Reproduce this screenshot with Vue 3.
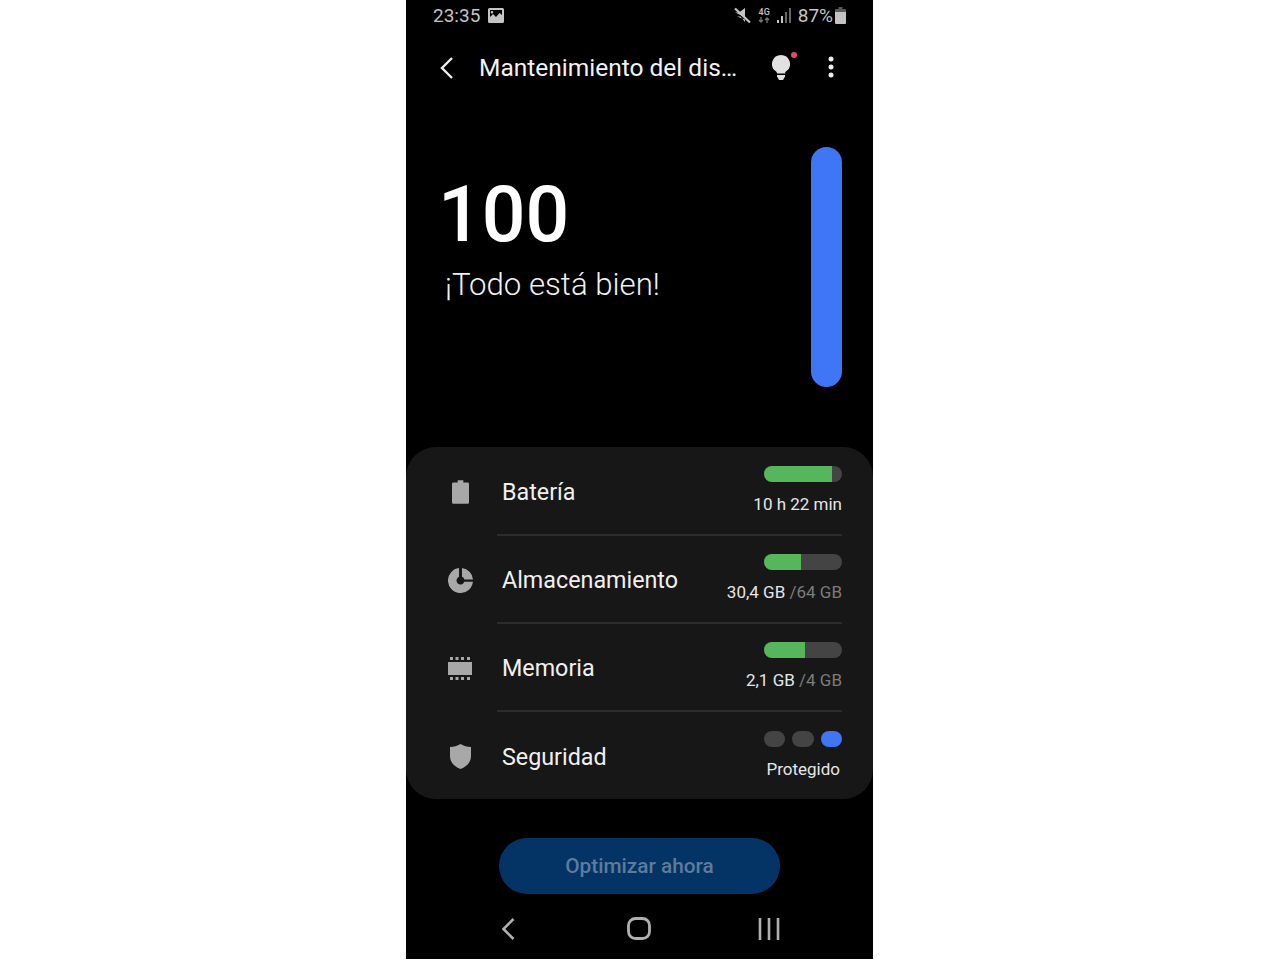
<template>
  <div class="phone">
    <!-- Status bar -->
    <div class="status-bar">
      <div class="status-left">
        <span>23:35</span>
        <svg class="img-icon" width="16" height="15" viewBox="0 0 16 15">
          <path fill="#c4c4c4" fill-rule="evenodd" d="M1.5 0h13A1.5 1.5 0 0 1 16 1.5v12a1.5 1.5 0 0 1-1.5 1.5h-13A1.5 1.5 0 0 1 0 13.500v-12A1.500 1.500 0 0 1 1.500 0zM2 2v7l3-3 3 3 3.500-4L14 7V2zM4 3a1.300 1.300 0 1 1 0 2.600A1.300 1.300 0 0 1 4 3z"/>
        </svg>
      </div>
      <div class="status-right">
        <svg class="mute" width="17" height="17" viewBox="0 0 17 17">
          <path fill="#c4c4c4" d="M1 5.500h4L11 1v9zM3 9.500h3.500L11 15v-2.500z"/>
          <path stroke="#c4c4c4" stroke-width="2.200" d="M1 1.500l15 14"/>
        </svg>
        <div class="net">
          <span class="net-label">4G</span>
          <svg width="12" height="6" viewBox="0 0 12 6">
            <path stroke="#777" stroke-width="1.300" fill="none" d="M3 0v5M1 3l2 2 2-2M9 6V1M7 3l2-2 2 2"/>
          </svg>
        </div>
        <svg class="signal" width="15" height="15" viewBox="0 0 15 15">
          <rect x="0" y="12" width="2" height="3" fill="#c4c4c4"/>
          <rect x="4" y="8" width="2" height="7" fill="#c4c4c4"/>
          <rect x="8" y="4" width="2" height="11" fill="#666"/>
          <rect x="12" y="0" width="2" height="15" fill="#666"/>
        </svg>
        <span class="pct">87%</span>
        <svg width="11" height="17" viewBox="0 0 11 17">
          <path fill="#5a5a5a" d="M3.500 0h4v2H10a1 1 0 0 1 1 1v2H0V3a1 1 0 0 1 1-1h2.500z"/>
          <path fill="#c4c4c4" d="M0 5h11v11a1 1 0 0 1-1 1H1a1 1 0 0 1-1-1z"/>
        </svg>
      </div>
    </div>

    <!-- Header -->
    <div class="app-bar">
      <svg class="back" width="16" height="24" viewBox="0 0 16 24">
        <path d="M13 2 3 12l10 10" fill="none" stroke="#eee" stroke-width="2.400"/>
      </svg>
      <span class="title">Mantenimiento del dis…</span>
      <div class="bulb">
        <svg width="18" height="26" viewBox="0 0 18 26">
          <path fill="#e2e2e2" d="M9 0a9 9 0 0 1 5.500 16.100c-1 .8-1.500 1.400-1.500 2.400H5c0-1-.5-1.600-1.500-2.400A9 9 0 0 1 9 0z"/>
          <path fill="#e2e2e2" d="M5 20h8v1.500L11 25H7l-2-3.500z"/>
        </svg>
        <span class="dot"></span>
      </div>
      <svg class="more" width="6" height="24" viewBox="0 0 6 24">
        <circle cx="3" cy="4" r="2.500" fill="#eee"/>
        <circle cx="3" cy="12" r="2.500" fill="#eee"/>
        <circle cx="3" cy="20" r="2.500" fill="#eee"/>
      </svg>
    </div>

    <!-- Score -->
    <div class="hero">
      <div class="score">
        <div class="score-num">100</div>
        <div class="score-msg">¡Todo está bien!</div>
      </div>
      <div class="score-bar"></div>
    </div>

    <!-- Items -->
    <div class="card">
      <div v-for="(item, i) in items" :key="item.label" class="row">
        <div class="row-icon">
          <svg v-if="item.icon === 'battery'" width="17" height="24" viewBox="0 0 18 25">
            <path fill="#a8a8a8" d="M6 0h6v2.500h4.500A1.500 1.500 0 0 1 18 4v19.500a1.500 1.500 0 0 1-1.500 1.500h-15A1.500 1.500 0 0 1 0 23.500V4a1.500 1.500 0 0 1 1.500-1.500H6z"/>
          </svg>
          <svg v-else-if="item.icon === 'storage'" width="25" height="25" viewBox="0 0 25 25">
            <path fill="#a8a8a8" d="M11 .1V8.800A4 4 0 1 0 16.300 13.800H24.900A12.500 12.500 0 1 1 11 .1z"/>
            <path fill="#a8a8a8" d="M14 .1A12.500 12.500 0 0 1 25 11.500H16.400A4 4 0 0 0 14 8.800z"/>
          </svg>
          <svg v-else-if="item.icon === 'memory'" width="24" height="23" viewBox="0 0 24 23">
            <rect x="0" y="5" width="24" height="13" fill="#a8a8a8"/>
            <g fill="#a8a8a8">
              <rect x="2" y="0" width="3" height="3"/><rect x="7.500" y="0" width="3" height="3"/><rect x="13" y="0" width="3" height="3"/><rect x="19" y="0" width="3" height="3"/>
              <rect x="2" y="20" width="3" height="3"/><rect x="7.500" y="20" width="3" height="3"/><rect x="13" y="20" width="3" height="3"/><rect x="19" y="20" width="3" height="3"/>
            </g>
          </svg>
          <svg v-else width="21" height="25" viewBox="0 0 21 25">
            <path fill="#a8a8a8" d="M10.500 0C14 2 17 3 21 3v9c0 6-4 10.500-10.500 13C4 22.500 0 18 0 12V3c4 0 7-1 10.500-3z"/>
          </svg>
        </div>
        <div class="row-body" :class="{ last: i === items.length - 1 }">
          <span class="row-label">{{ item.label }}</span>
          <div class="row-right">
            <div v-if="item.fill" class="meter">
              <div class="meter-fill" :style="{ width: item.fill + '%' }"></div>
            </div>
            <div v-else class="dots">
              <span class="sec-dot"></span>
              <span class="sec-dot"></span>
              <span class="sec-dot on"></span>
            </div>
            <div class="row-value" :class="{ inset: !item.fill }">
              {{ item.value }}<span v-if="item.total" class="total"> /{{ item.total }}</span>
            </div>
          </div>
        </div>
      </div>
    </div>

    <div class="action">
      <button type="button" class="optimize">Optimizar ahora</button>
    </div>

    <!-- Nav bar -->
    <div class="nav-bar">
      <svg width="14" height="24" viewBox="0 0 14 24">
        <path d="M12.500 2 2.500 12l10 10" fill="none" stroke="#b0b0b0" stroke-width="2.600"/>
      </svg>
      <svg class="home" width="24" height="23" viewBox="0 0 24 23">
        <rect x="1.500" y="1.500" width="21" height="20" rx="7" fill="none" stroke="#b0b0b0" stroke-width="2.800"/>
      </svg>
      <svg width="22" height="22" viewBox="0 0 22 22">
        <path d="M2 0v22M11 0v22M20 0v22" stroke="#b0b0b0" stroke-width="2.600"/>
      </svg>
    </div>
  </div>
</template>

<script setup>
const items = [
  { label: 'Batería', icon: 'battery', fill: 87, value: '10 h 22 min' },
  { label: 'Almacenamiento', icon: 'storage', fill: 47.5, value: '30,4 GB', total: '64 GB' },
  { label: 'Memoria', icon: 'memory', fill: 52, value: '2,1 GB', total: '4 GB' },
  { label: 'Seguridad', icon: 'shield', value: 'Protegido' }
]
</script>

<style>
html, body {
  background: #fff;
}
</style>

<style scoped>
.phone {
  width: 467px;
  height: 959px;
  margin-left: 406px;
  background: #000;
  display: flex;
  flex-direction: column;
  font-family: Roboto, "Liberation Sans", sans-serif;
  color: #f0f0f0;
  overflow: hidden;
}

.status-bar {
  height: 31px;
  display: flex;
  align-items: center;
  justify-content: space-between;
  padding: 0 27px;
  font-size: 19px;
  color: #c4c4c4;
}

.status-left {
  display: flex;
  align-items: center;
  gap: 8px;
}

.status-right {
  display: flex;
  align-items: center;
}

.mute {
  margin-right: 7px;
}

.net {
  display: flex;
  flex-direction: column;
  align-items: center;
  width: 13px;
  margin-right: 6px;
}

.net-label {
  font-size: 9px;
  line-height: 9px;
  font-weight: 500;
}

.pct {
  margin: 0 2px 0 6px;
}

.app-bar {
  height: 73px;
  display: flex;
  align-items: center;
  padding-left: 33px;
}

.title {
  margin-left: 24px;
  width: 293px;
  font-size: 24.5px;
  color: #f2f2f2;
  white-space: nowrap;
}

.bulb {
  position: relative;
  width: 18px;
  height: 26px;
}

.bulb svg {
  display: block;
}

.dot {
  position: absolute;
  top: -3px;
  right: -7px;
  width: 6px;
  height: 6px;
  border-radius: 50%;
  background: #e8476a;
}

.more {
  margin: -1px 0 0 38px;
}

.hero {
  height: 343px;
  display: flex;
  justify-content: space-between;
  padding: 43px 31px 60px 32px;
  box-sizing: border-box;
}

.score-num {
  font-size: 77px;
  font-weight: 500;
  line-height: 90px;
  margin-top: 23px;
  color: #fff;
}

.score-msg {
  font-size: 31.2px;
  font-weight: 300;
  line-height: 40px;
  margin: 5px 0 0 7px;
  color: #f0f0f0;
}

.score-bar {
  width: 31px;
  height: 240px;
  border-radius: 16px;
  background: #3e76f6;
}

.card {
  height: 352px;
  padding-top: 1px;
  box-sizing: border-box;
  background: #171717;
  border-radius: 30px;
  display: flex;
  flex-direction: column;
}

.row {
  flex: none;
  height: 88px;
  display: flex;
}

.row-icon {
  width: 91px;
  padding: 0 3px 0 20px;
  box-sizing: border-box;
  display: flex;
  align-items: center;
  justify-content: center;
}

.row-body {
  flex: 1;
  margin-right: 31px;
  padding: 2px 0 0 5px;
  box-sizing: border-box;
  display: flex;
  align-items: center;
  justify-content: space-between;
  border-bottom: 2px solid #2c2c2c;
}

.row-body.last {
  border-bottom: none;
}

.row-label {
  font-size: 23.3px;
  color: #f0f0f0;
}

.row-right {
  display: flex;
  flex-direction: column;
  align-items: flex-end;
  gap: 12px;
  margin-top: -4px;
}

.meter {
  width: 78px;
  height: 16px;
  border-radius: 8px;
  background: #444;
  overflow: hidden;
}

.meter-fill {
  height: 100%;
  background: #57b55c;
}

.dots {
  display: flex;
  gap: 7px;
}

.sec-dot {
  width: 21.33px;
  height: 16px;
  border-radius: 8px;
  background: #444;
}

.sec-dot.on {
  background: #3e76f6;
}

.row-value {
  font-size: 17px;
  line-height: 20px;
  color: #e6e6e6;
}

.row-value.inset {
  margin-right: 2px;
}

.total {
  color: #7c7c7c;
}

.action {
  display: flex;
  justify-content: center;
  padding-top: 39px;
}

.optimize {
  width: 281px;
  height: 56px;
  border: none;
  border-radius: 28px;
  background: #043365;
  color: #5c7c9e;
  font-family: inherit;
  font-size: 20.8px;
  font-weight: 500;
}

.nav-bar {
  flex: 1;
  display: flex;
  align-items: center;
  justify-content: space-between;
  padding: 4px 93px 0 95px;
}

.home {
  margin-left: 4px;
}
</style>
